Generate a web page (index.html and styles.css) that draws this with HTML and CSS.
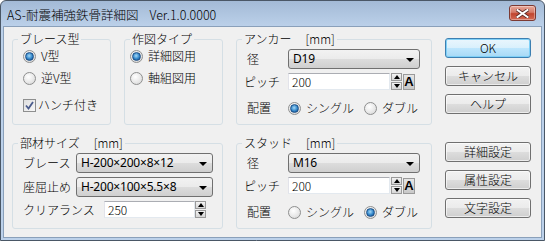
FILE: index.html
```html
<!DOCTYPE html>
<html lang="ja">
<head>
    <meta charset="UTF-8">
    <title>AS-耐震補強鉄骨詳細図</title>
    <link rel="stylesheet" href="styles.css">
</head>
<body>
    <div class="window">
        <div class="titlebar">
            <span class="title">AS-耐震補強鉄骨詳細図<span class="ver">Ver.1.0.0000</span></span>
            <span class="close">
                <svg width="13" height="9" viewBox="0 0 13 9">
                    <path d="M1.5 1 L11.5 8 M11.5 1 L1.5 8" stroke="#5a2a26" stroke-width="3.6" stroke-linecap="square"/>
                    <path d="M1.5 1 L11.5 8 M11.5 1 L1.5 8" stroke="#ffffff" stroke-width="2" stroke-linecap="square"/>
                </svg>
            </span>
        </div>

        <div class="client">
            <div class="col-left">
                <div class="row-top">
                    <fieldset class="group group-brace">
                        <legend>ブレース型</legend>
                        <div class="body">
                            <div class="opt opt-first"><span class="radio on"></span>V型</div>
                            <div class="opt"><span class="radio"></span>逆V型</div>
                            <div class="opt opt-check"><span class="check">
                                <svg width="9" height="9" viewBox="0 0 9 9"><path d="M1 4.5 L3.5 7.5 L8 1" fill="none" stroke="#4a5b8c" stroke-width="1.8"/></svg>
                            </span>ハンチ付き</div>
                        </div>
                    </fieldset>
                    <fieldset class="group group-draw">
                        <legend>作図タイプ</legend>
                        <div class="body">
                            <div class="opt opt-first"><span class="radio on"></span>詳細図用</div>
                            <div class="opt"><span class="radio"></span>軸組図用</div>
                        </div>
                    </fieldset>
                </div>

                <fieldset class="group group-size">
                    <legend>部材サイズ<span class="unit">[mm]</span></legend>
                    <div class="body">
                        <div class="field">
                            <span class="lbl lbl-53">ブレース</span>
                            <div class="combo combo-wide"><span class="val">H-200×200×8×12</span><i class="arrow"></i></div>
                        </div>
                        <div class="field">
                            <span class="lbl lbl-53">座屈止め</span>
                            <div class="combo combo-wide"><span class="val">H-200×100×5.5×8</span><i class="arrow"></i></div>
                        </div>
                        <div class="field">
                            <span class="lbl lbl-81">クリアランス</span>
                            <div class="edit edit-short">250</div>
                            <div class="spin"><i class="up"></i><i class="down"></i></div>
                        </div>
                    </div>
                </fieldset>
            </div>

            <div class="col-mid">
                <fieldset class="group group-bolt">
                    <legend>アンカー<span class="unit">[mm]</span></legend>
                    <div class="body">
                        <div class="field">
                            <span class="lbl lbl-44 lbl-in">径</span>
                            <div class="combo combo-mid"><span class="val">D19</span><i class="arrow"></i></div>
                        </div>
                        <div class="field">
                            <span class="lbl lbl-44">ピッチ</span>
                            <div class="edit edit-mid">200</div>
                            <div class="spin spin-gap"><i class="up"></i><i class="down"></i></div>
                            <span class="auto">A</span>
                        </div>
                        <div class="field field-radio">
                            <span class="lbl lbl-44 lbl-in">配置</span>
                            <div class="opt"><span class="radio on"></span>シングル</div>
                            <div class="opt opt-second"><span class="radio"></span>ダブル</div>
                        </div>
                    </div>
                </fieldset>

                <fieldset class="group group-bolt">
                    <legend>スタッド<span class="unit">[mm]</span></legend>
                    <div class="body">
                        <div class="field">
                            <span class="lbl lbl-44 lbl-in">径</span>
                            <div class="combo combo-mid"><span class="val">M16</span><i class="arrow"></i></div>
                        </div>
                        <div class="field">
                            <span class="lbl lbl-44">ピッチ</span>
                            <div class="edit edit-mid">200</div>
                            <div class="spin spin-gap"><i class="up"></i><i class="down"></i></div>
                            <span class="auto">A</span>
                        </div>
                        <div class="field field-radio">
                            <span class="lbl lbl-44 lbl-in">配置</span>
                            <div class="opt"><span class="radio"></span>シングル</div>
                            <div class="opt opt-second"><span class="radio on"></span>ダブル</div>
                        </div>
                    </div>
                </fieldset>
            </div>

            <div class="col-btn">
                <button class="btn btn-default">OK</button>
                <button class="btn">キャンセル</button>
                <button class="btn">ヘルプ</button>
                <button class="btn btn-gap">詳細設定</button>
                <button class="btn">属性設定</button>
                <button class="btn">文字設定</button>
            </div>
        </div>
    </div>
</body>
</html>
```

FILE: styles.css
```css
* {
    margin: 0;
    padding: 0;
    box-sizing: border-box;
}
body {
    width: 545px;
    height: 241px;
    overflow: hidden;
    font-family: "Noto Sans CJK JP", sans-serif;
    font-size: 12px;
    font-weight: 300;
    line-height: 14px;
    color: #000;
    background: #fff;
}
.window {
    width: 545px;
    height: 241px;
    border: 1px solid #4a5766;
    border-radius: 6px 6px 0 0;
    background: linear-gradient(#a3bad6, #bcd1ea 26px, #bcd1ea);
    display: flex;
    flex-direction: column;
}
.titlebar {
    height: 25px;
    display: flex;
    align-items: flex-start;
    justify-content: space-between;
    padding: 4px 8px 0 6px;
}
.title {
    padding-top: 3px;
    line-height: 14px;
    font-size: 12.5px;
}
.ver {
    margin-left: 11px;
}
.close {
    width: 27px;
    height: 16px;
    border: 1px solid #7c3a33;
    border-radius: 3px;
    background: linear-gradient(#e9a99b, #d47a68 45%, #c0452f 55%, #d36b55);
    box-shadow: inset 0 0 0 1px rgba(255, 255, 255, 0.35);
    display: flex;
    align-items: center;
    justify-content: center;
}
.close svg {
    display: block;
}
.client {
    flex: 1;
    margin: 0 2px 2px 2px;
    border: 1px solid #8aa0ba;
    background: #f0f0f0;
    display: flex;
    padding: 5px 0 0 8px;
}

/* group boxes */
.group {
    border: 1px solid #d5dfe5;
    border-radius: 3px;
    padding: 0;
    margin: 0;
    min-width: 0;
    height: 93px;
}
.group legend {
    margin-left: 5px;
    padding: 0 2px;
    line-height: 14px;
}
.unit {
    margin-left: 14px;
}
.col-left {
    width: 211px;
    display: flex;
    flex-direction: column;
    gap: 11px;
}
.row-top {
    display: flex;
    gap: 13px;
}
.group-brace,
.group-draw {
    width: 99px;
}
.group-brace .body {
    padding: 3px 0 0 10px;
}
.group-draw .body {
    padding: 3px 0 0 5px;
}
.group-size {
    width: 211px;
}
.group-size .body {
    padding: 3px 0 0 10px;
}
.col-mid {
    width: 196px;
    margin-left: 13px;
    display: flex;
    flex-direction: column;
    gap: 11px;
}
.group-bolt .body {
    padding: 3px 0 0 7px;
}
.col-btn {
    width: 86px;
    margin-left: 13px;
    padding-top: 6px;
    display: flex;
    flex-direction: column;
    gap: 8px;
}

/* radio / check */
.opt {
    display: flex;
    align-items: center;
    height: 14px;
    margin-top: 8px;
}
.opt-first {
    margin-top: 0;
}
.opt-check {
    margin-top: 13px;
}
.radio {
    width: 13px;
    height: 13px;
    border-radius: 50%;
    border: 1px solid #8e8f8f;
    background: radial-gradient(circle at 40% 35%, #ffffff, #e6e6e6 60%, #cfcfcf);
    margin-right: 5px;
    display: flex;
    align-items: center;
    justify-content: center;
    flex: none;
}
.radio.on::after {
    content: "";
    width: 7px;
    height: 7px;
    border-radius: 50%;
    background: radial-gradient(circle at 45% 40%, #a6d9f7, #2f84c8 55%, #13427a);
    border: 1px solid #1e4f86;
}
.check {
    width: 13px;
    height: 13px;
    border: 1px solid #8e8f8f;
    background: linear-gradient(135deg, #dedede, #f8f8f8);
    margin-right: 2px;
    display: flex;
    align-items: center;
    justify-content: center;
    flex: none;
}
.check svg {
    display: block;
}

/* fields */
.field {
    display: flex;
    align-items: center;
    margin-top: 4px;
}
.field:first-child {
    margin-top: 0;
}
.field-radio {
    margin-top: 11px;
    height: 14px;
}
.field-radio .opt {
    margin-top: 0;
}
.opt-second {
    margin-left: 10px;
}
.lbl {
    flex: none;
}
.lbl-53 {
    width: 53px;
}
.lbl-81 {
    width: 81px;
}
.lbl-44 {
    width: 44px;
}
.lbl-in {
    padding-left: 3px;
}
.combo {
    height: 20px;
    border: 1px solid #707070;
    border-radius: 3px;
    background: linear-gradient(#f2f2f2, #ebebeb 50%, #dddddd 50%, #cfcfcf);
    display: flex;
    align-items: center;
    justify-content: space-between;
    padding: 0 5px 0 4px;
}
.combo .val {
    font-family: "Noto Sans", "Noto Sans CJK JP", sans-serif;
    font-weight: 400;
    letter-spacing: -0.2px;
}
.combo-wide {
    width: 137px;
}
.combo-mid {
    width: 132px;
}
.arrow {
    width: 0;
    height: 0;
    border-left: 4px solid transparent;
    border-right: 4px solid transparent;
    border-top: 4px solid #000;
    margin-top: 2px;
}
.edit {
    height: 17px;
    border: 1px solid #abadb3;
    border-right-color: #e3e9ef;
    border-bottom-color: #e3e9ef;
    border-left-color: #e2e3ea;
    background: #fff;
    padding-left: 3px;
    line-height: 15px;
}
.edit-short {
    width: 91px;
}
.edit-mid {
    width: 102px;
}
.spin {
    width: 11px;
    height: 17px;
    display: flex;
    flex-direction: column;
    gap: 1px;
}
.spin-gap {
    margin-left: 1px;
}
.spin i {
    flex: 1;
    background: linear-gradient(#f3f3f3, #d6d6d6);
    border: 1px solid #9a9a9a;
    display: flex;
    align-items: center;
    justify-content: center;
}
.spin i::after {
    content: "";
    width: 0;
    height: 0;
    border-left: 3.5px solid transparent;
    border-right: 3.5px solid transparent;
}
.spin .up::after {
    border-bottom: 4px solid #000;
}
.spin .down::after {
    border-top: 4px solid #000;
}
.auto {
    width: 12px;
    height: 16px;
    margin-left: 1px;
    border: 1px solid #9a9a9a;
    background: linear-gradient(#e6e6e6, #c8c8c8);
    font-family: "Liberation Sans", sans-serif;
    font-weight: bold;
    font-size: 13px;
    line-height: 14px;
    text-align: center;
}

/* buttons */
.btn {
    height: 20px;
    border: 1px solid #707070;
    border-radius: 3px;
    background: linear-gradient(#f2f2f2, #ebebeb 50%, #dddddd 50%, #cfcfcf);
    box-shadow: inset 0 0 0 1px rgba(255, 255, 255, 0.6);
    font-family: "Noto Sans CJK JP", sans-serif;
    font-size: 12px;
    font-weight: 300;
    line-height: 16px;
    color: #000;
}
.btn-default {
    border-color: #3c7fb1;
    background: linear-gradient(#eaf6fd, #d9f0fc 50%, #bee6fd 50%, #a7d9f5);
    box-shadow: inset 0 0 0 1px #7fd0f7;
}
.btn-gap {
    margin-top: 20px;
}
```
